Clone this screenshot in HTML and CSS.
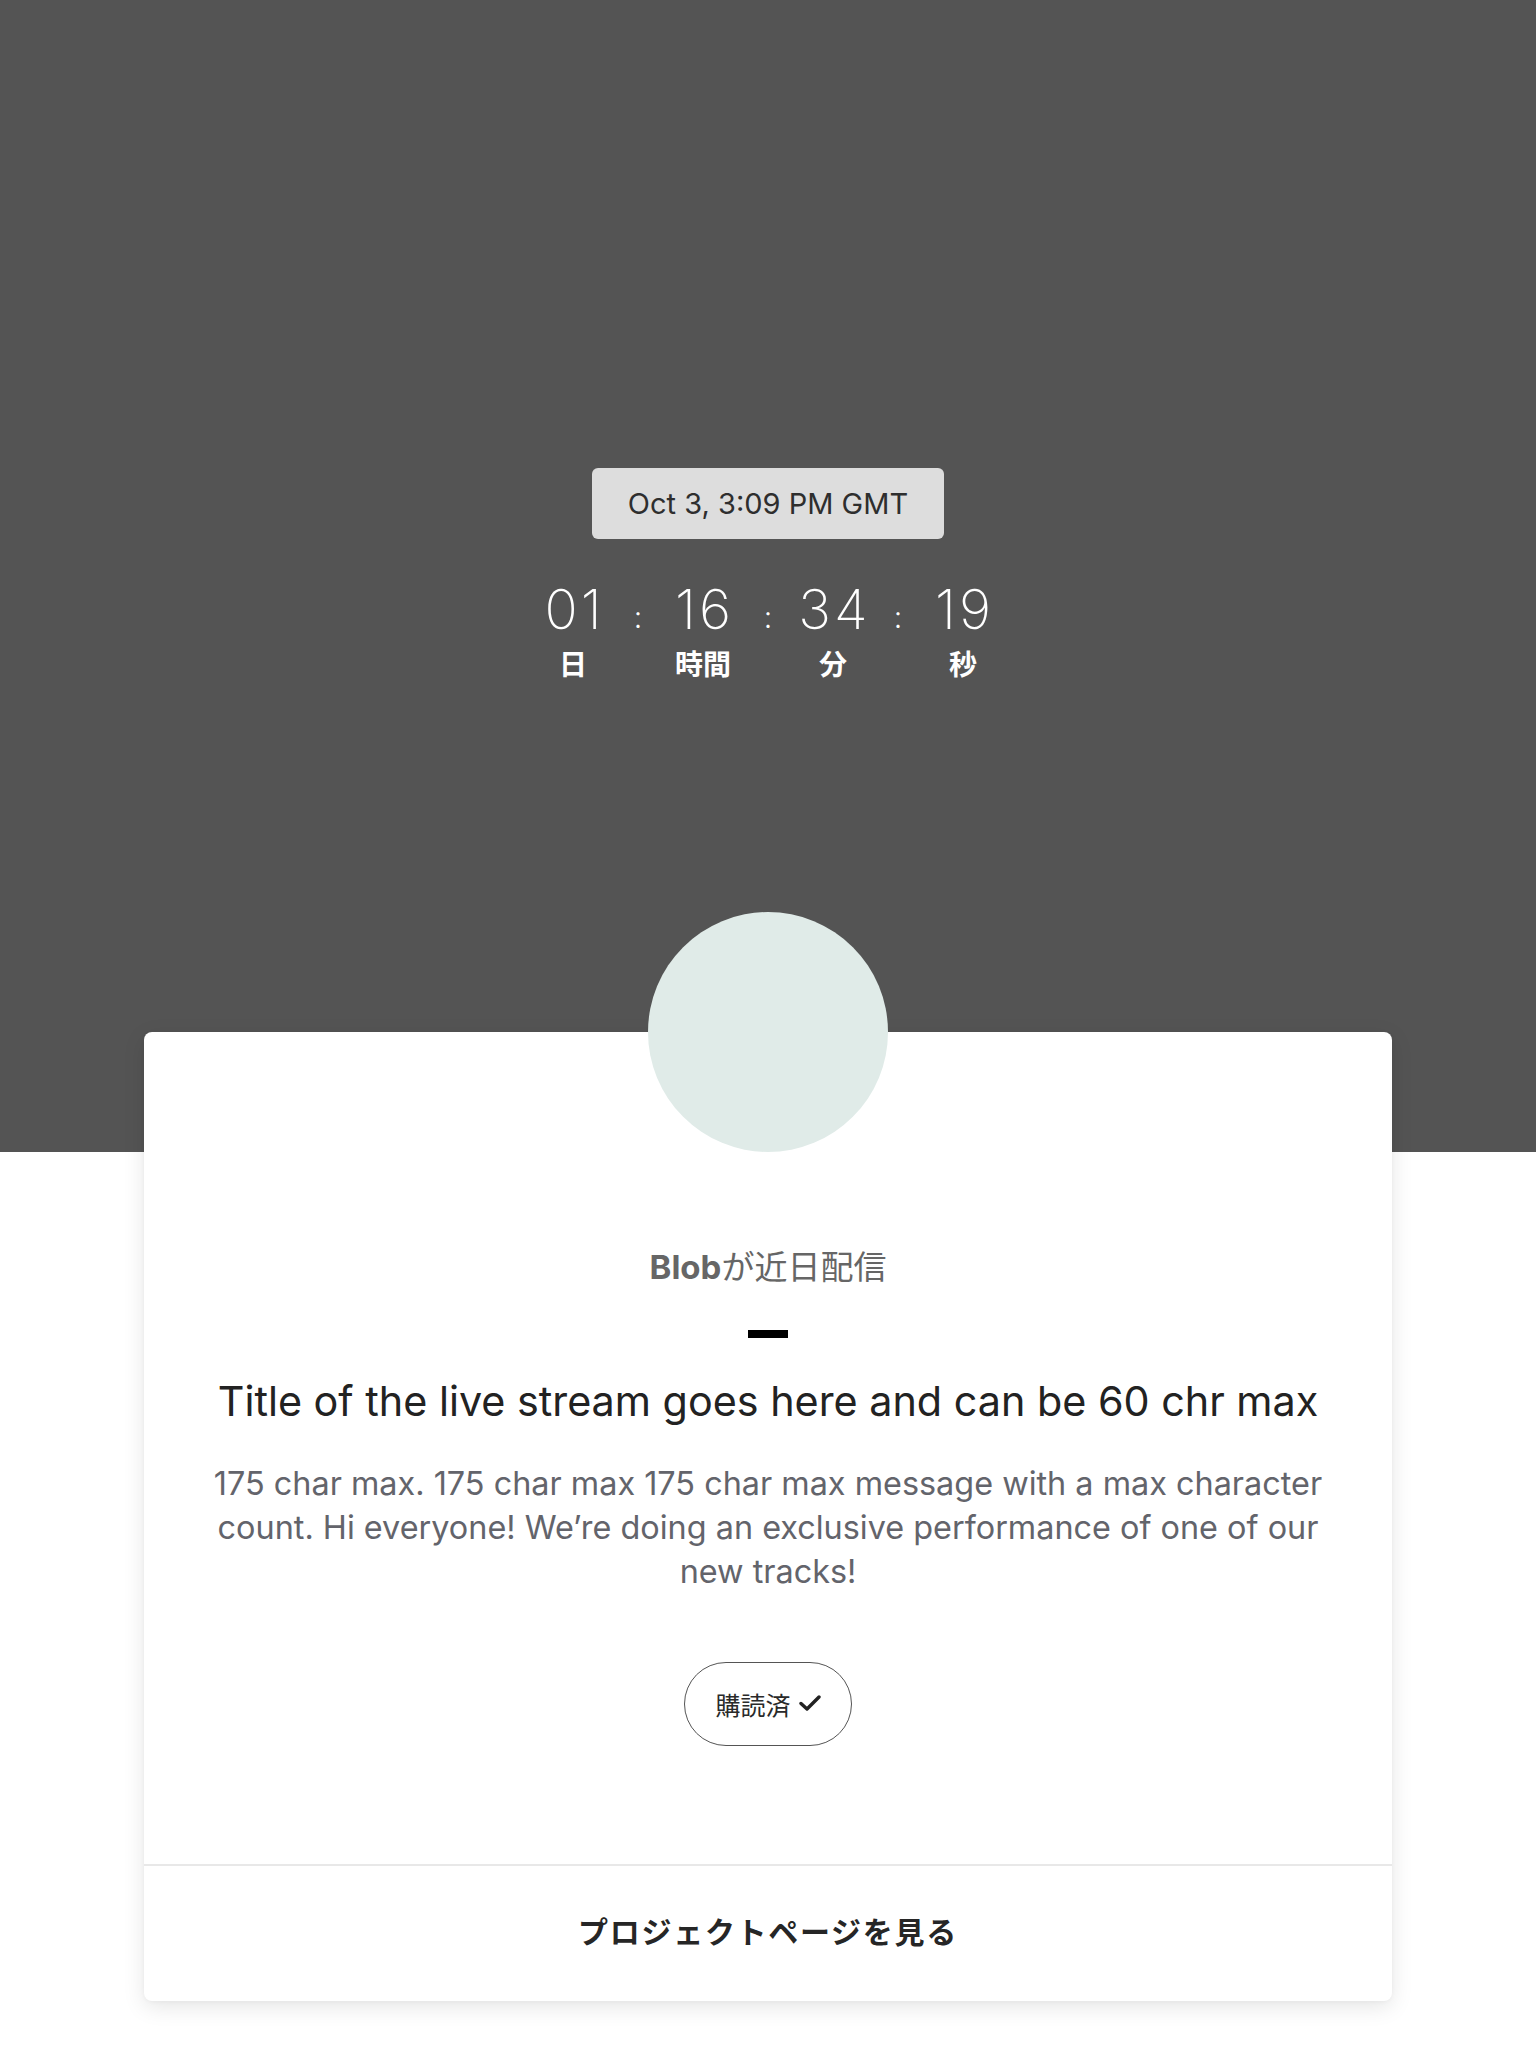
FILE: index.html
```html
<!DOCTYPE html>
<html lang="ja">
<head>
<meta charset="utf-8">
<title>Live stream</title>
<link rel="stylesheet" href="styles.css">
</head>
<body>
<header class="hero">
  <div class="date-pill">Oct 3, 3:09 PM GMT</div>
  <div class="countdown">
    <div class="unit"><span class="num">01</span><span class="label">日</span></div>
    <span class="colon">:</span>
    <div class="unit"><span class="num">16</span><span class="label">時間</span></div>
    <span class="colon">:</span>
    <div class="unit"><span class="num">34</span><span class="label">分</span></div>
    <span class="colon">:</span>
    <div class="unit"><span class="num">19</span><span class="label">秒</span></div>
  </div>
</header>
<main class="card">
  <div class="card-body">
    <div class="avatar"></div>
    <p class="upcoming"><b>Blob</b>が近日配信</p>
    <div class="dash"></div>
    <h1 class="title">Title of the live stream goes here and can be 60 chr max</h1>
    <p class="desc">175 char max. 175 char max 175 char max message with a max character count. Hi everyone! We’re doing an exclusive performance of one of our new tracks!</p>
    <button class="subscribed">購読済
      <svg class="check" viewBox="0 0 22 18" width="22" height="18" aria-hidden="true"><path d="M2 9.5 L8 15 L20 3" fill="none" stroke="#222" stroke-width="3.4" stroke-linecap="round" stroke-linejoin="round"/></svg>
    </button>
  </div>
  <a class="project-link" href="#">プロジェクトページを見る</a>
</main>
</body>
</html>
```
FILE: styles.css
```css
* { box-sizing: border-box; }
html, body { margin: 0; padding: 0; background: #ffffff; }
body {
  font-family: "Inter", "Noto Sans CJK JP", sans-serif;
  color: #222;
  padding-bottom: 48px;
}
.hero {
  height: 1152px;
  background: #545454;
  padding-top: 468px;
  display: flex;
  flex-direction: column;
  align-items: center;
}
.date-pill {
  width: 352px;
  height: 71px;
  background: #dddddd;
  border-radius: 6px;
  display: flex;
  align-items: center;
  justify-content: center;
  font-size: 29px;
  color: #2e2e2e;
  font-family: "Inter", sans-serif;
}
.countdown {
  display: flex;
  margin-top: 37px;
  color: #fff;
}
.unit {
  width: 100px;
  display: flex;
  flex-direction: column;
  align-items: center;
}
.num {
  font-family: "Inter", sans-serif;
  font-size: 55px;
  font-weight: 200;
  line-height: 66px;
  letter-spacing: 3px;
  padding-left: 3px;
}
.label {
  font-family: "Noto Sans CJK JP", sans-serif;
  font-weight: 700;
  font-size: 28px;
  line-height: 34px;
  margin-top: 4px;
}
.colon {
  width: 30px;
  text-align: center;
  font-family: "Inter", sans-serif;
  font-weight: 300;
  font-size: 30px;
  line-height: 66px;
  padding-top: 8px;
}
.card {
  width: 1248px;
  margin: -120px auto 0;
  background: #fff;
  border-radius: 8px;
  box-shadow: 0 6px 22px rgba(0, 0, 0, 0.10), 0 1px 4px rgba(0,0,0,0.04);
  position: relative;
  display: flex;
  flex-direction: column;
}
.card-body {
  display: flex;
  flex-direction: column;
  align-items: center;
  padding: 0 54px 118px;
  border-bottom: 2px solid #e8e8e8;
}
.avatar {
  width: 240px;
  height: 240px;
  border-radius: 50%;
  background: #e0ebe8;
  margin-top: -120px;
}
.upcoming {
  margin: 94px 0 0;
  font-size: 33px;
  line-height: 42px;
  color: #666;
}
.upcoming b { font-weight: 700; }
.dash {
  width: 40px;
  height: 8px;
  background: #000;
  margin-top: 42px;
}
.title {
  margin: 37px 0 0;
  font-size: 41.3px;
  line-height: 52px;
  font-weight: 400;
  color: #222;
  text-align: center;
}
.desc {
  margin: 35px 0 0;
  max-width: 1140px;
  font-size: 32.4px;
  line-height: 44px;
  color: #63646b;
  text-align: center;
}
.subscribed {
  margin-top: 68px;
  width: 168px;
  height: 84px;
  border: 1.5px solid #555;
  border-radius: 42px;
  background: #fff;
  display: flex;
  align-items: center;
  justify-content: center;
  gap: 8px;
  font-family: "Noto Sans CJK JP", sans-serif;
  font-size: 25px;
  color: #2a2a2a;
  padding: 0;
}
.check { display: block; margin-top: -2px; }
.project-link {
  height: 135px;
  padding-bottom: 8px;
  display: flex;
  align-items: center;
  justify-content: center;
  font-family: "Noto Sans CJK JP", sans-serif;
  font-weight: 700;
  font-size: 30px;
  color: #262626;
  text-decoration: none;
  letter-spacing: 1.7px;
}
```
